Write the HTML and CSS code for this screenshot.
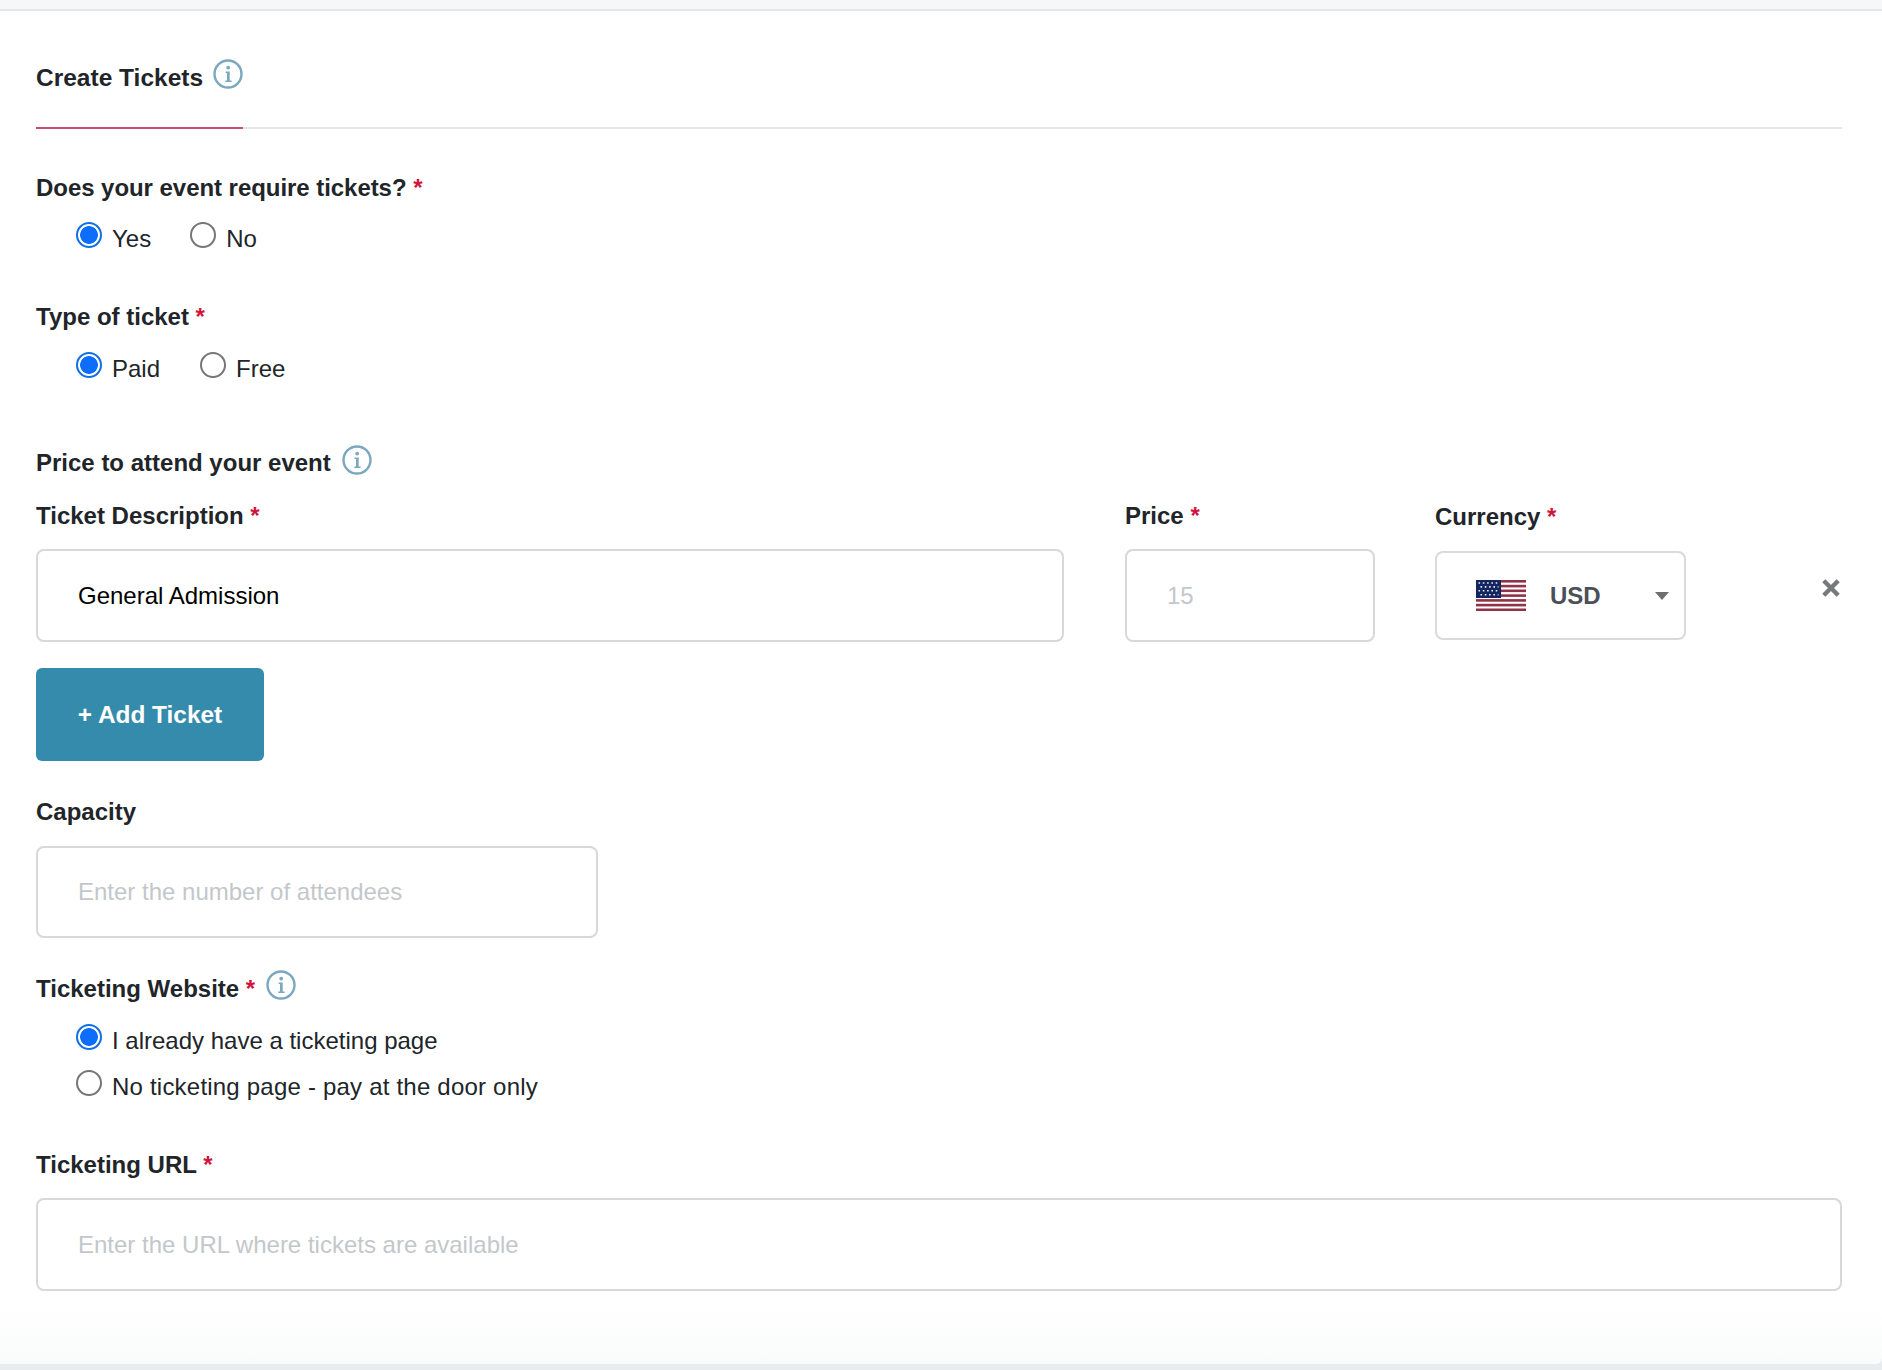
FILE: index.html
```html
<!DOCTYPE html>
<html lang="en">
<head>
<meta charset="utf-8">
<title>Create Tickets</title>
<link rel="stylesheet" href="styles.css">
</head>
<body>
<main class="card">
  <svg class="defs" width="0" height="0" aria-hidden="true">
    <symbol id="info" viewBox="0 0 30 30">
      <circle cx="15" cy="15" r="13.5" fill="none" stroke="#7ba8bf" stroke-width="2.4"/>
      <circle cx="15.2" cy="8.6" r="1.9" fill="#7ba8bf"/>
      <path d="M12.6 12.4h4.1v9.2h1.9v1.5h-6.4v-1.5h1.8v-7.7h-1.4z" fill="#7ba8bf"/>
    </symbol>
  </svg>

  <div class="tabs"><div class="tab">Create Tickets <svg class="info info-tab"><use href="#info"/></svg></div></div>

  <div class="label q1"><span class="tight">Does your event require tickets?</span> <span class="req">*</span></div>
  <div class="radios radios-first">
    <label class="radio r-yes"><input type="radio" name="req" checked><span>Yes</span></label>
    <label class="radio"><input type="radio" name="req"><span>No</span></label>
  </div>

  <div class="label q2">Type of ticket <span class="req">*</span></div>
  <div class="radios radios-wide">
    <label class="radio r-paid"><input type="radio" name="type" checked><span>Paid</span></label>
    <label class="radio"><input type="radio" name="type"><span>Free</span></label>
  </div>

  <div class="label q3">Price to attend your event <svg class="info info-price"><use href="#info"/></svg></div>

  <div class="ticket-row">
    <div class="col col-desc">
      <div class="label">Ticket Description <span class="req">*</span></div>
      <input class="field field-tall" type="text" value="General Admission">
    </div>
    <div class="col col-price">
      <div class="label">Price <span class="req">*</span></div>
      <input class="field field-tall" type="text" placeholder="15">
    </div>
    <div class="col col-currency">
      <div class="label">Currency <span class="req">*</span></div>
      <div class="select">
        <svg class="flag" viewBox="0 0 50 31" aria-hidden="true">
          <rect width="50" height="31" fill="#fff"/>
          <g fill="#8f3448">
            <rect y="0" width="50" height="2.6"/><rect y="4.8" width="50" height="2.6"/><rect y="9.5" width="50" height="2.6"/><rect y="14.3" width="50" height="2.6"/><rect y="19.1" width="50" height="2.6"/><rect y="23.8" width="50" height="2.6"/><rect y="28.5" width="50" height="2.5"/>
          </g>
          <rect width="25" height="18" fill="#14265f"/>
          <path d="M2.5 3h20M4.5 6.9h18M2.5 10.8h20M4.5 14.7h18" stroke="#e8ebf3" stroke-width="1.6" stroke-dasharray="1.6 2.7" fill="none"/>
        </svg>
        <span class="code">USD</span>
        <span class="caret"></span>
      </div>
    </div>
    <button class="remove" type="button" aria-label="Remove ticket">
      <svg viewBox="0 0 18 18" width="18" height="18"><path d="M1.8 1.8l14.4 14.4M16.2 1.8l-14.4 14.4" stroke="#77797c" stroke-width="4.4" fill="none"/></svg>
    </button>
  </div>

  <button class="add" type="button">+ Add Ticket</button>

  <div class="label q4">Capacity</div>
  <input class="field field-cap" type="text" placeholder="Enter the number of attendees">

  <div class="label q5">Ticketing Website <span class="req">*</span> <svg class="info info-web"><use href="#info"/></svg></div>
  <div class="radio-stack">
    <label class="radio"><input type="radio" name="web" checked><span>I already have a ticketing page</span></label>
    <label class="radio"><input type="radio" name="web"><span class="wide">No ticketing page - pay at the door only</span></label>
  </div>

  <div class="label q6">Ticketing URL <span class="req">*</span></div>
  <input class="field field-url" type="text" placeholder="Enter the URL where tickets are available">
</main>
</body>
</html>
```

FILE: styles.css
```css
* { box-sizing: border-box; }

html, body { margin: 0; height: 1370px; overflow: hidden; }

body {
  background: linear-gradient(#f6f7f8 0 9px, #e8ecee 9px);
  font-family: "Liberation Sans", Arial, sans-serif;
  font-size: 24px;
  line-height: 36px;
  color: #212529;
}

.defs { position: absolute; }

.card {
  margin-top: 9px;
  height: 1355px;
  padding: 0 40px 0 36px;
  background: linear-gradient(#fff 1300px, #f9fafa 1355px);
  border-top: 2px solid #e4e6e8;
  border-bottom-right-radius: 6px;
}

.tabs {
  padding-top: 49px;
  border-bottom: 2px solid #e3e5e7;
}

.tab {
  width: 207px;
  height: 69px;
  margin-bottom: -2px;
  border-bottom: 2px solid #c2506e;
  font-size: 24.5px;
  font-weight: 700;
  white-space: nowrap;
}

.label { font-weight: 700; white-space: nowrap; }
.tight { letter-spacing: -0.05px; }
.wide { letter-spacing: 0.21px; }
.req { color: #d0143c; }

.info { width: 30px; height: 30px; vertical-align: top; }
.info-tab { margin: -1px 0 0 3px; }
.info-price { margin: 0 0 0 5px; }
.info-web { margin: -1px 0 0 4px; }

.q1 { margin-top: 41px; }
.q2 { margin-top: 42px; }
.q3 { margin-top: 58px; }
.q4 { margin-top: 33px; }
.q5 { margin-top: 33px; }
.q6 { margin-top: 42px; }

.radios {
  display: flex;
  gap: 38px;
  margin-top: 16px;
  padding-left: 40px;
}
.radios-first { gap: 39px; margin-top: 15px; }
.radios-wide { gap: 40px; }

.radio-stack {
  display: flex;
  flex-direction: column;
  gap: 10px;
  margin-top: 16px;
  padding-left: 40px;
}

.radio { display: flex; gap: 10px; color: #212529; }

.radio input {
  appearance: none;
  width: 26px;
  height: 26px;
  margin: 1px 0 0;
  border: 2px solid #767676;
  border-radius: 50%;
  background: #fff;
}

.radio input:checked {
  border-color: #0f6fe8;
  background: radial-gradient(circle, #0d6efd 0 8.5px, #fff 9.2px);
}

.ticket-row {
  display: flex;
  align-items: flex-start;
  margin-top: 17px;
}

.col { display: flex; flex-direction: column; }
.col-desc { width: 1028px; margin-right: 61px; }
.col-price { width: 250px; margin-right: 60px; }
.col-currency { width: 251px; padding-top: 1px; }

.field {
  display: block;
  width: 100%;
  padding: 0 40px;
  border: 2px solid #d6d8da;
  border-radius: 8px;
  background: #fff;
  font: inherit;
  color: #000;
  outline: none;
}
.field::placeholder { color: #c3c7cb; opacity: 1; }

.field-tall { height: 93px; margin-top: 15px; }
.field-cap { width: 562px; height: 92px; margin-top: 16px; }
.field-url { height: 93px; margin-top: 15px; }

.select {
  display: flex;
  align-items: center;
  height: 89px;
  margin-top: 16px;
  padding: 0 15px 0 39px;
  border: 2px solid #d9dadb;
  border-radius: 8px;
}

.flag { width: 50px; height: 31px; margin-top: -1px; }
.code { margin-left: 24px; font-weight: 700; color: #495057; }
.caret {
  margin-left: auto;
  border: solid transparent;
  border-width: 8px 7px 0;
  border-top-color: #6c6f72;
}

.remove {
  width: 18px;
  height: 18px;
  margin: 81px 0 0 auto;
  padding: 0;
  border: 0;
  background: none;
  line-height: 0;
  transform: translateX(-2px);
}

.add {
  display: block;
  width: 228px;
  height: 93px;
  margin-top: 26px;
  border: 0;
  border-radius: 6px;
  background: #358bab;
  color: #fff;
  font: 700 24.4px/36px "Liberation Sans", Arial, sans-serif;
}
```
